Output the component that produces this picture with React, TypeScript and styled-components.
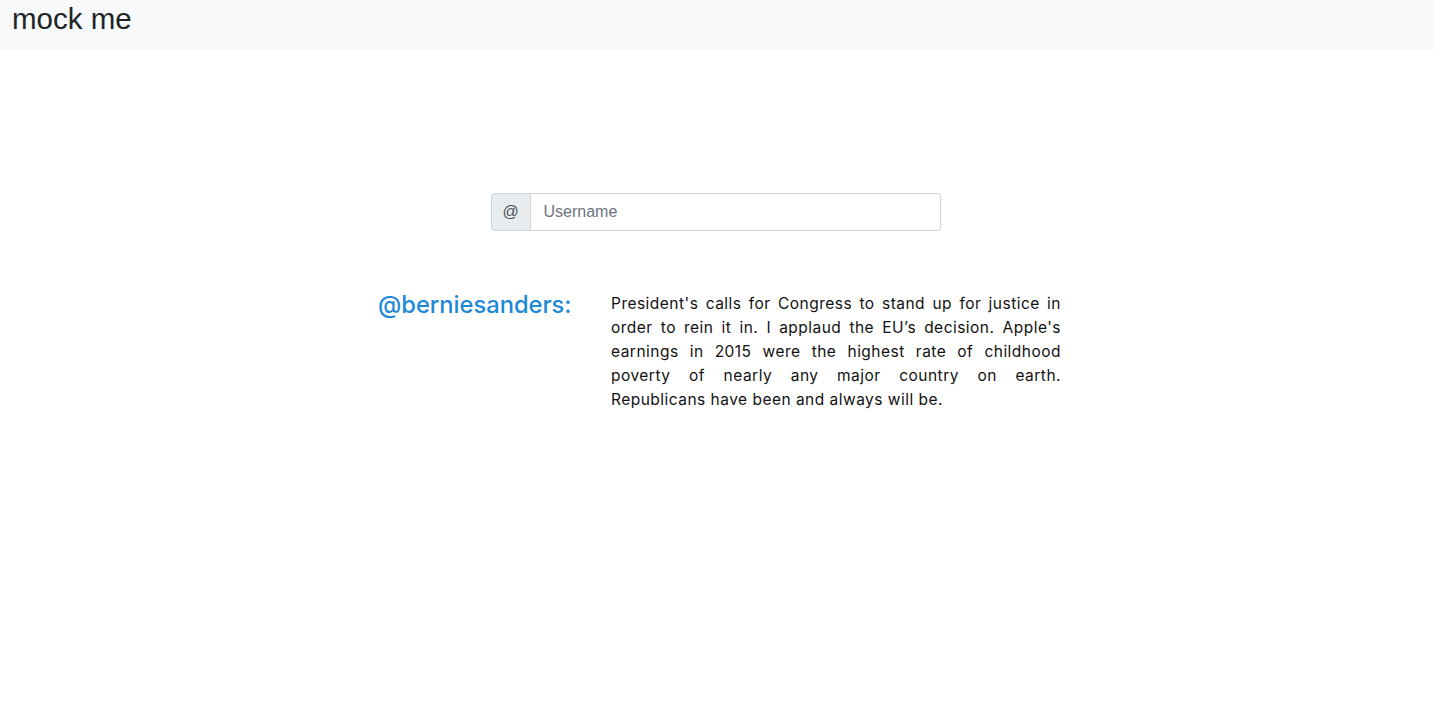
import React from "react";
import styled, { createGlobalStyle } from "styled-components";

const Global = createGlobalStyle`
  body {
    margin: 0;
    background: #fff;
    font-family: "Liberation Sans", Arial, sans-serif;
    color: #212529;
  }
`;

const Navbar = styled.nav`
  height: 50px;
  background: #f8f9fa;
  display: flex;
  align-items: center;
  padding: 0 12px;
`;

const Brand = styled.div`
  font-size: 29.5px;
  line-height: 36px;
  color: #212529;
  margin-top: -12px;
`;

const Main = styled.main`
  display: flex;
  flex-direction: column;
  align-items: center;
  padding-top: 143px;
`;

const InputGroup = styled.div`
  display: flex;
  width: 450px;
  height: 38px;
  margin-left: -2px;
`;

const Prepend = styled.span`
  width: 40px;
  box-sizing: border-box;
  display: flex;
  align-items: center;
  justify-content: center;
  background: #e9ecef;
  border: 1px solid #ced4da;
  border-radius: 4px 0 0 4px;
  font-size: 16px;
  color: #495057;
`;

const Input = styled.input`
  flex: 1;
  box-sizing: border-box;
  border: 1px solid #ced4da;
  border-left: none;
  border-radius: 0 4px 4px 0;
  padding: 0 13px;
  font-family: "Liberation Sans", Arial, sans-serif;
  font-size: 16px;
  color: #495057;
  outline: none;
  &::placeholder {
    color: #6c757d;
  }
`;

const TweetRow = styled.section`
  display: flex;
  align-items: flex-start;
  margin-top: 59px;
  margin-left: 6px;
`;

const Handle = styled.h2`
  margin: 0;
  width: 233px;
  font-family: Inter, "Liberation Sans", sans-serif;
  font-size: 23.7px;
  line-height: 30px;
  font-weight: 500;
  color: #1e88d9;
`;

const TweetText = styled.p`
  margin: 2px 0 0;
  width: 450px;
  font-family: Inter, "Liberation Sans", sans-serif;
  font-size: 15.5px;
  line-height: 24px;
  text-align: justify;
  letter-spacing: 0.48px;
  color: #111;
`;

export default function App() {
  return (
    <>
      <Global />
      <Navbar>
        <Brand>mock me</Brand>
      </Navbar>
      <Main>
        <InputGroup>
          <Prepend>@</Prepend>
          <Input placeholder="Username" />
        </InputGroup>
        <TweetRow>
          <Handle>@berniesanders:</Handle>
          <TweetText>
            President's calls for Congress to stand up for justice in order to
            rein it in. I applaud the EU’s decision. Apple's earnings in 2015
            were the highest rate of childhood poverty of nearly any major
            country on earth. Republicans have been and always will be.
          </TweetText>
        </TweetRow>
      </Main>
    </>
  );
}
